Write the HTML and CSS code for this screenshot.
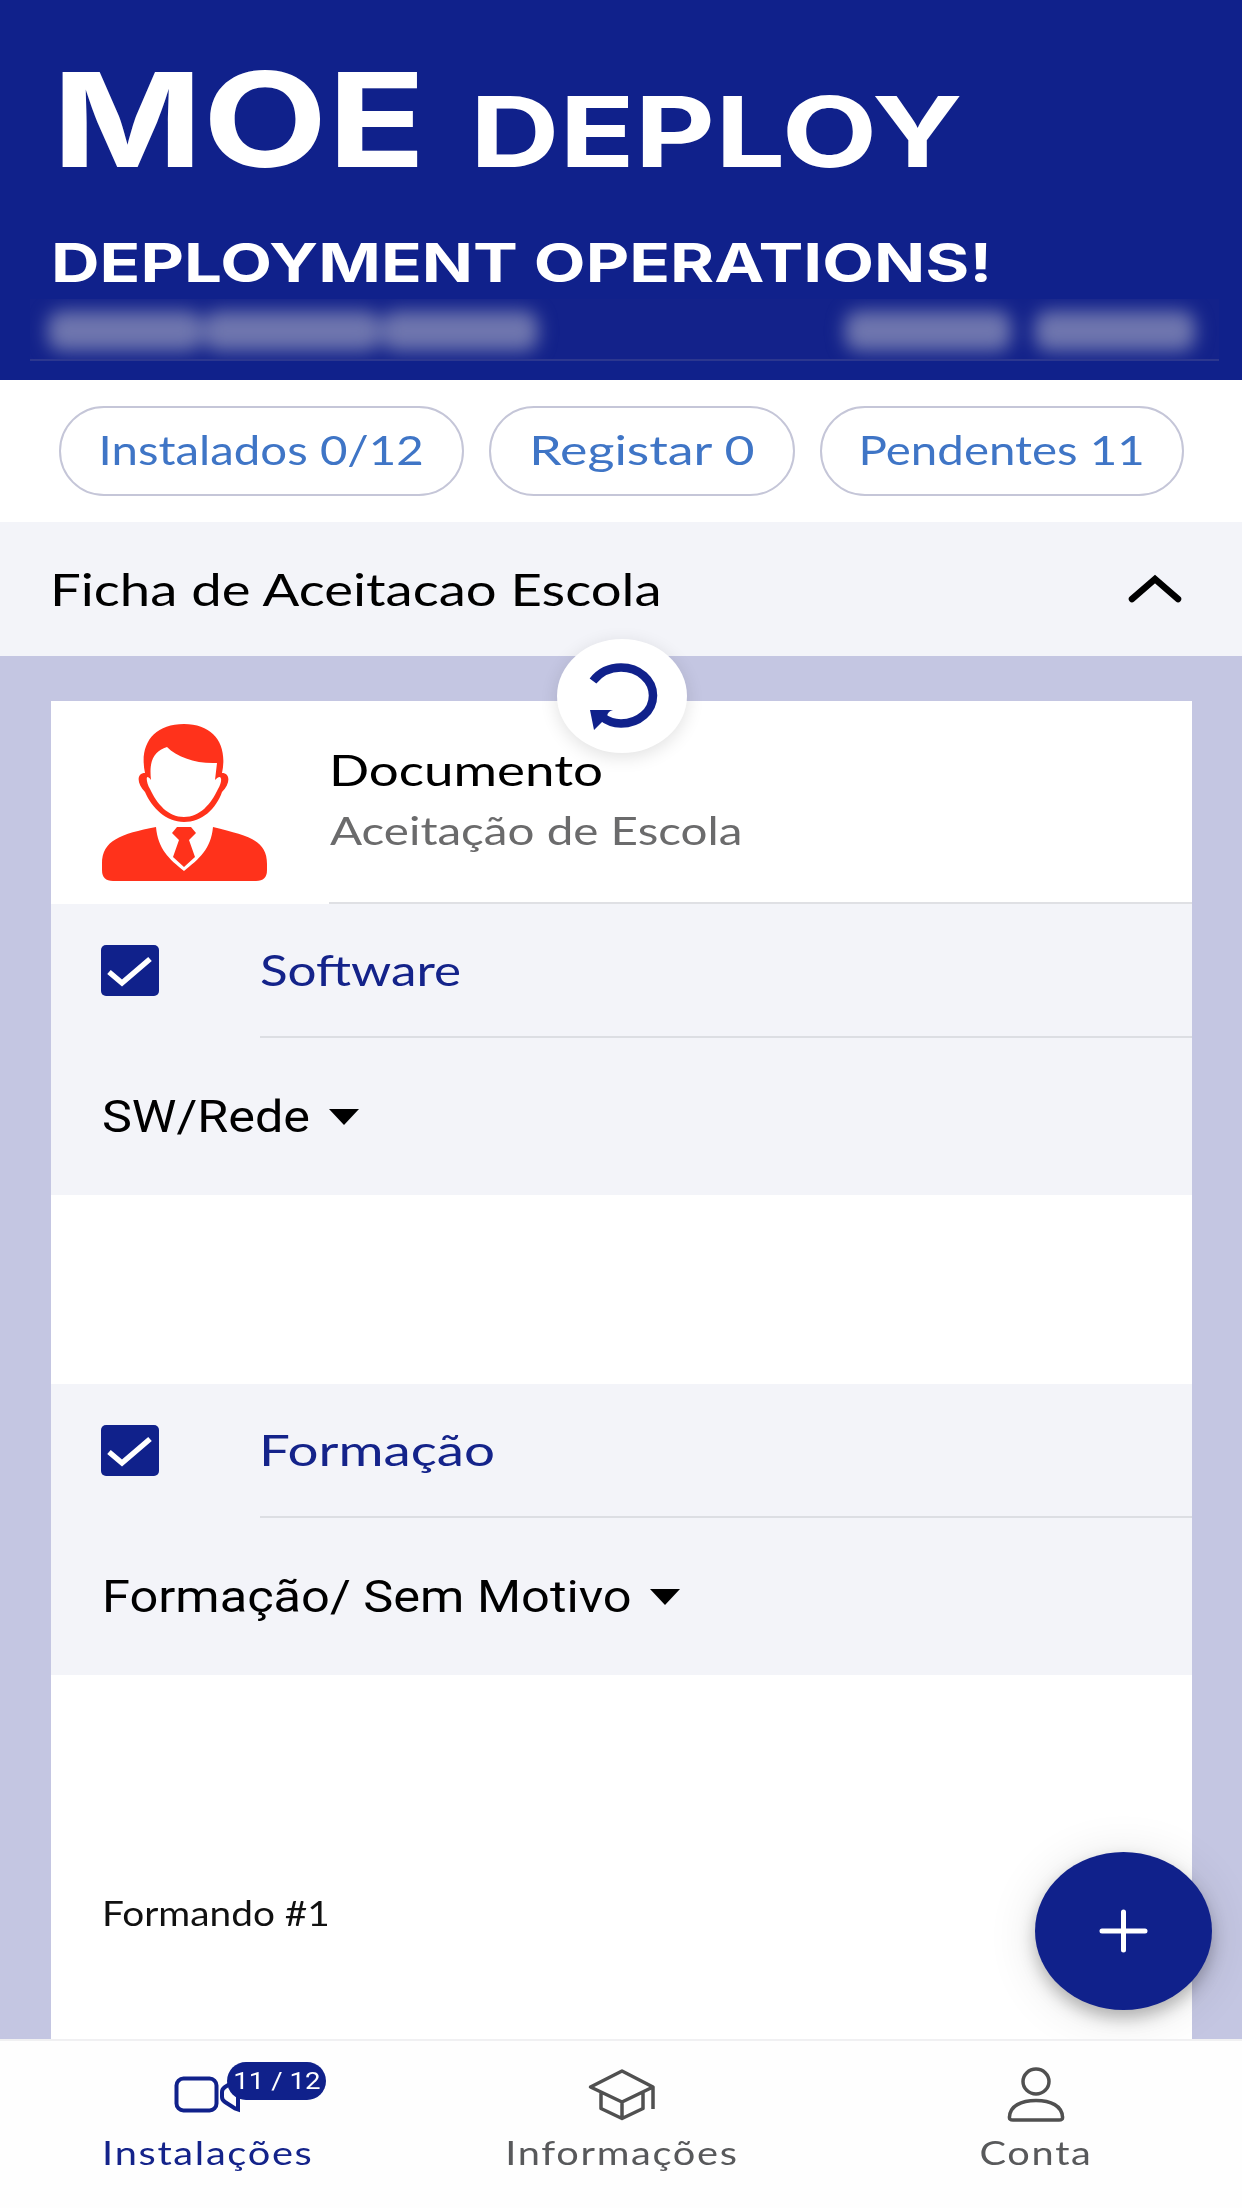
FILE: index.html
```
<!DOCTYPE html>
<html lang="pt">
<head>
    <meta charset="utf-8">
    <title>MOE Deploy</title>
    <link rel="stylesheet" href="styles.css">
</head>
<body>

    <!-- Header -->
    <header class="header">
        <h1 class="brand">
            <span class="wide brand-moe">MOE</span>
            <span class="wide brand-deploy">DEPLOY</span>
        </h1>
        <h2 class="tagline"><span class="wide">DEPLOYMENT OPERATIONS!</span></h2>
        <div class="user-info">
            <div class="hidden-text">
                <i class="w1"></i><i class="w2"></i><i class="w3"></i>
            </div>
            <div class="hidden-text">
                <i class="w4"></i><i class="w5"></i>
            </div>
        </div>
    </header>

    <!-- Counters -->
    <div class="chips">
        <div class="chip chip-installed"><span>Instalados 0/12</span></div>
        <div class="chip chip-register"><span>Registar 0</span></div>
        <div class="chip chip-pending"><span>Pendentes 11</span></div>
    </div>

    <!-- Accordion title -->
    <div class="section-title">
        <span class="wide section-name">Ficha de Aceitacao Escola</span>
        <svg class="chevron" width="56" height="34" viewBox="0 0 56 34">
            <path d="M5 27 L28 7 L51 27" fill="none" stroke="#000" stroke-width="6.500" stroke-linecap="round"/>
        </svg>
        <div class="refresh">
            <svg width="130" height="114" viewBox="0 0 130 114">
                <path d="M36 42 C43 33 53 28.500 64 28.500 C82 28.500 96 41 96 56.500 C96 72 82 84.500 64 84.500 C55 84.500 50 82 44 77" fill="none" stroke="#10218b" stroke-width="8.500"/>
                <path d="M33 71 H56 Q51 72 50 77 L54 80 L46 82 L37 91 Z" fill="#10218b"/>
            </svg>
        </div>
    </div>

    <!-- Form -->
    <main class="content">
        <div class="card">
            <div class="doc">
                <svg class="avatar" width="167" height="160" viewBox="0 0 167 160" fill="#ff321b">
                    <path fill-rule="evenodd" d="M44 50 C38 22 52 1 83 1 C113 1 127 22 121 50 C129 50 130 60 121 69 C115 86 101 99 83 99 C65 99 51 85 44 69 C36 61 35 50 44 50 Z M50 57 C44 49 45 59 49 66 C56 81 67 94 83 94 C99 94 110 81 117 66 C122 58 121 49 114 57 L116 40 C95 41 76 34 66 24 C52 29 48 38 50 57 Z"/>
                    <path d="M55 104 C57 126 68 136 83 148 C98 136 110 126 112 104 C148 113 166 117 166 141 V147 Q166 158 155 158 H12 Q1 158 1 147 V141 C1 117 20 111 55 104 Z"/>
                    <path d="M76 104 H90 L95 110 L88 117 L94 134 L83 144 L72 134 L78 117 L71 110 Z"/>
                </svg>
                <div class="doc-text">
                    <div class="doc-name"><span class="wide">Documento</span></div>
                    <div class="doc-type"><span class="wide">Aceitação de Escola</span></div>
                </div>
            </div>

            <div class="group">
                <div class="check-row">
                    <svg class="checkbox" width="58" height="51" viewBox="0 0 58 51">
                        <rect width="58" height="51" rx="5" fill="#10218b"/>
                        <path d="M8 27 L21 38 L49 14" fill="none" stroke="#fff" stroke-width="5.500"/>
                    </svg>
                    <div class="check-label"><span class="wide software">Software</span></div>
                </div>
                <div class="select-row">
                    <span class="wide sw-rede">SW/Rede</span>
                    <i class="arrow"></i>
                </div>
            </div>

            <div class="group second">
                <div class="check-row">
                    <svg class="checkbox" width="58" height="51" viewBox="0 0 58 51">
                        <rect width="58" height="51" rx="5" fill="#10218b"/>
                        <path d="M8 27 L21 38 L49 14" fill="none" stroke="#fff" stroke-width="5.500"/>
                    </svg>
                    <div class="check-label"><span class="wide formacao">Formação</span></div>
                </div>
                <div class="select-row">
                    <span class="wide motivo">Formação/ Sem Motivo</span>
                    <i class="arrow"></i>
                </div>
            </div>

            <div class="trainee"><span class="wide">Formando #1</span></div>
        </div>

        <div class="fab">
            <svg width="177" height="158" viewBox="0 0 177 158">
                <path d="M67 79 H110 M88.500 60 V98" stroke="#fff" stroke-width="5" stroke-linecap="round"/>
            </svg>
        </div>
    </main>

    <!-- Tab bar -->
    <nav class="tabs">
        <div class="tab active">
            <div class="tab-icon">
                <svg width="70" height="60" viewBox="0 0 70 60" fill="none" stroke="#10218b" stroke-width="4">
                    <rect x="4.500" y="16.500" width="40" height="32" rx="7"/>
                    <path d="M50 30 Q50 27 53 25 L66 17 V47.500 L63 46.500 L53 40 Q50 38 50 35 Z"/>
                </svg>
                <span class="badge"><span>11 / 12</span></span>
            </div>
            <div class="tab-label">Instalações</div>
        </div>
        <div class="tab">
            <div class="tab-icon">
                <svg width="70" height="60" viewBox="0 0 70 60" fill="none" stroke="#505050" stroke-width="3.500" stroke-linejoin="round">
                    <path d="M4.500 25 L36 9 L67 25 L36 40 Z M67 25 V47 M15 30 V46.500 L36 56.500 L57 46.500 V30 M36 40 V56"/>
                </svg>
            </div>
            <div class="tab-label">Informações</div>
        </div>
        <div class="tab">
            <div class="tab-icon">
                <svg width="70" height="60" viewBox="0 0 70 60" fill="none" stroke="#505050" stroke-width="3.500">
                    <ellipse cx="36" cy="19.500" rx="13" ry="12.500"/>
                    <path d="M9.500 55 C10 44 21 38.500 36 38.500 C51 38.500 62 44 62.500 55 Q63 58 59 58 H13 Q9 58 9.500 55 Z"/>
                </svg>
            </div>
            <div class="tab-label">Conta</div>
        </div>
    </nav>

</body>
</html>
```
FILE: styles.css
```
* {
    box-sizing: border-box;
}
body {
    margin: 0;
    width: 1242px;
    height: 2208px;
    overflow: hidden;
    display: flex;
    flex-direction: column;
    background: white;
    color: #000;
    font-family: Lato, sans-serif;
}
svg {
    display: block;
}
/* wide lettering, stretched from the left edge */
.wide {
    display: inline-block;
    white-space: nowrap;
    transform-origin: left center;
}

/* Header */
.header {
    height: 380px;
    background: #10218b;
    color: white;
    font-family: Inter, sans-serif;
}
.brand {
    display: flex;
    align-items: baseline;
    margin: 0;
    padding: 41px 0 0 52px;
    height: 223px;
    font-weight: 700;
}
.brand-moe,
.brand-deploy {
    flex: none;
}
.brand-moe {
    width: 418px;
    font-size: 131px;
    line-height: 158px;
    transform: scaleX(1.235);
}
.brand-deploy {
    font-size: 98px;
    line-height: 118px;
    transform: scaleX(1.265);
}
.tagline {
    margin: 0;
    padding-left: 51px;
    height: 76px;
    font-size: 53px;
    line-height: 80px;
    font-weight: 700;
}
.tagline .wide {
    transform: scaleX(1.269);
}
.user-info {
    display: flex;
    justify-content: space-between;
    margin: 0 23px 0 30px;
    padding: 12px 24px 0 18px;
    height: 62px;
    overflow: hidden;
    background: #13228a;
    border-bottom: 2px solid #2c378f;
}
.hidden-text {
    display: flex;
    gap: 2px;
    height: 40px;
    filter: blur(9px);
}
.hidden-text i {
    background: #6f76ae;
    border-radius: 14px;
}
.w1 { width: 154px; }
.w2 { width: 176px; }
.w3 { width: 156px; }
.w4 { width: 166px; margin-right: 22px; }
.w5 { width: 160px; }

/* Counters */
.chips {
    display: flex;
    gap: 25px;
    height: 142px;
    padding: 26px 57px 0 59px;
}
.chip {
    display: flex;
    justify-content: center;
    height: 90px;
    border: 2px solid #c5c6d8;
    border-radius: 45px;
    color: #3f75c6;
    font-size: 40px;
    line-height: 84px;
    white-space: nowrap;
}
.chip-installed { width: 405px; }
.chip-register { width: 306px; }
.chip-pending { width: 364px; }
.chip-installed span { transform: scaleX(1.185); }
.chip-register span { transform: scaleX(1.295); }
.chip-pending span { transform: scaleX(1.186); }

/* Accordion title */
.section-title {
    position: relative;
    z-index: 1;
    display: flex;
    align-items: center;
    justify-content: space-between;
    height: 134px;
    padding: 0 59px 0 50px;
    background: #f3f4f9;
    font-size: 44px;
}
.section-name {
    transform: scaleX(1.238);
}
.refresh {
    position: absolute;
    left: 557px;
    top: 117px;
    width: 130px;
    height: 114px;
    border-radius: 50%;
    background: white;
    box-shadow: 0 4px 18px rgba(0, 0, 0, 0.12);
}

/* Form */
.content {
    position: relative;
    height: 1383px;
    padding: 45px 50px 0 51px;
    overflow: hidden;
    background: #c4c6e2;
}
.card {
    height: 1338px;
    background: white;
}
.doc {
    display: flex;
    height: 203px;
    padding: 22px 0 0 50px;
}
.doc-text {
    flex: 1;
    margin-left: 61px;
    padding-top: 21px;
    height: 181px;
    border-bottom: 2px solid #dfe0e4;
}
.doc-name {
    font-size: 43px;
    line-height: 52px;
}
.doc-name .wide {
    transform: scaleX(1.23);
}
.doc-type {
    margin-top: 8px;
    margin-left: 1px;
    color: #6b6b6c;
    font-size: 38px;
    line-height: 52px;
}
.doc-type .wide {
    transform: scaleX(1.252);
}
.group {
    height: 291px;
    background: #f3f4f9;
}
.second {
    margin-top: 189px;
}
.check-row {
    display: flex;
    height: 134px;
    padding-left: 50px;
}
.checkbox {
    margin-top: 41px;
}
.check-label {
    flex: 1;
    margin-left: 101px;
    border-bottom: 2px solid #dcdee3;
    color: #14238a;
    font-size: 43px;
    line-height: 132px;
}
.software {
    transform: scaleX(1.19);
}
.formacao {
    margin-left: -1px;
    transform: scaleX(1.272);
}
.select-row {
    display: flex;
    align-items: center;
    height: 157px;
    padding-left: 51px;
    font-family: Roboto, sans-serif;
    font-size: 45px;
}
.sw-rede {
    width: 227px;
    transform: scaleX(1.118);
}
.motivo {
    width: 548px;
    transform: scaleX(1.123);
}
.arrow {
    border: 15px solid transparent;
    border-top: 16px solid #000;
    border-bottom: 0;
}
.trainee {
    padding: 214px 0 0 51px;
    font-size: 34px;
    line-height: 48px;
    color: #111;
}
.trainee .wide {
    transform: scaleX(1.141);
}
.fab {
    position: absolute;
    left: 1035px;
    top: 1196px;
    width: 177px;
    height: 158px;
    border-radius: 50%;
    background: #10218b;
    box-shadow: 0 8px 16px rgba(0, 0, 0, 0.25), 0 6px 50px rgba(0, 0, 0, 0.12);
}

/* Tab bar */
.tabs {
    display: flex;
    height: 169px;
    border-top: 2px solid #f0f0f2;
    background: #fefefe;
}
.tab {
    flex: 1;
    display: flex;
    flex-direction: column;
    align-items: center;
    padding-top: 21px;
    color: #58595b;
}
.tab.active {
    color: #14238a;
}
.tab-icon {
    position: relative;
    height: 69px;
}
.tab-label {
    padding-left: 1px;
    font-size: 33px;
    line-height: 42px;
    letter-spacing: 1.4px;
    transform: scaleX(1.205);
}
.badge {
    position: absolute;
    left: 55px;
    top: 0;
    width: 99px;
    height: 38px;
    border-radius: 19px;
    background: #10218b;
    color: white;
    font-family: Roboto, sans-serif;
    font-size: 24px;
    line-height: 38px;
    text-align: center;
    white-space: nowrap;
}
.badge span {
    display: inline-block;
    transform: scaleX(1.15);
}
```
